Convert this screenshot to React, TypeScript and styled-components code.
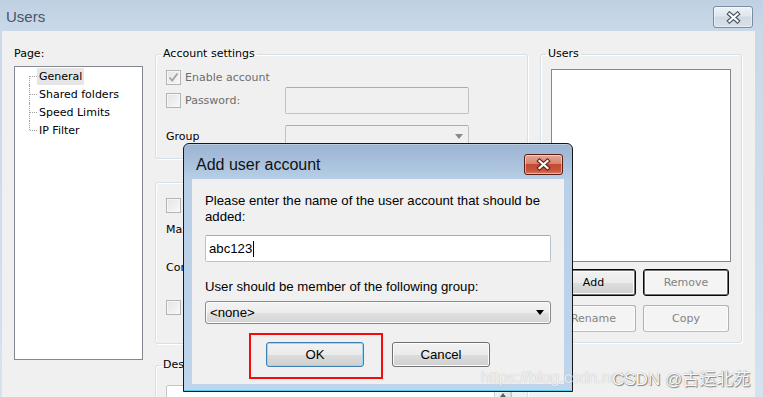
import React from "react";
import styled, { createGlobalStyle } from "styled-components";

const UI = `"DejaVu Sans", Tahoma, sans-serif`;
const SANS = `"Liberation Sans", Arial, sans-serif`;

const GlobalStyle = createGlobalStyle`
  html, body {
    margin: 0;
    padding: 0;
    background: #f0f0f0;
    overflow: hidden;
  }
`;

const Window = styled.div`
  position: relative;
  width: 763px;
  height: 397px;
  overflow: hidden;
  display: flex;
  flex-direction: column;
  background: linear-gradient(#bfd0e3, #cad9e8 31px, #d5e2ef);
  font-family: ${UI};
  font-size: 11px;
  color: #000;
`;

const TitleBar = styled.div`
  height: 31px;
  flex: none;
  display: flex;
  align-items: flex-start;
  justify-content: space-between;
  padding: 0 10px 0 6px;
`;

const WindowTitle = styled.div`
  margin-top: 8px;
  font-family: ${SANS};
  font-size: 15px;
  line-height: 18px;
  color: #46566a;
`;

const CloseButton = styled.div<{ $red?: boolean }>`
  margin-top: ${(p) => (p.$red ? 10 : 6)}px;
  width: ${(p) => (p.$red ? 39 : 40)}px;
  height: ${(p) => (p.$red ? 21 : 22)}px;
  box-sizing: border-box;
  border: 1px solid ${(p) => (p.$red ? "#5a1f14" : "#7d8da1")};
  border-radius: 3px;
  display: flex;
  align-items: center;
  justify-content: center;
  background: ${(p) =>
    p.$red
      ? "linear-gradient(#e6a797 0%, #d88470 45%, #c24a2f 50%, #c5553b 80%, #d67a60 100%)"
      : "linear-gradient(#eef2f7 0%, #dfe6ee 45%, #cfd9e4 50%, #d8e1eb 100%)"};
  box-shadow: inset 0 0 0 1px rgba(255, 255, 255, 0.45);
`;

const CloseGlyph = ({ outline }: { outline: string }) => (
  <svg width="15" height="13" viewBox="0 0 15 13">
    <path d="M3.5 3 L11.5 10 M11.5 3 L3.5 10" stroke={outline} strokeWidth="4.4" strokeLinecap="square" fill="none" />
    <path d="M3.5 3 L11.5 10 M11.5 3 L3.5 10" stroke="#fff" strokeWidth="2.2" strokeLinecap="square" fill="none" />
  </svg>
);

const Client = styled.div`
  flex: 1;
  margin: 0 8px 0 2px;
  background: #f0f0f0;
  display: grid;
  grid-template-columns: 129px 373px 202px;
  column-gap: 12px;
  align-items: start;
  padding: 16px 13px 0 12px;
`;

const Column = styled.div`
  display: flex;
  flex-direction: column;
`;

const PageLabel = styled.div`
  line-height: 14px;
  margin-bottom: 5px;
`;

const TreeBox = styled.div`
  height: 294px;
  box-sizing: border-box;
  border: 1px solid #828790;
  background: #fff;
`;

const TreeItem = styled.div<{ $pos: "first" | "mid" | "last" }>`
  position: relative;
  height: 18px;
  display: flex;
  align-items: center;
  padding-left: 22px;

  &::before {
    content: "";
    position: absolute;
    left: 14px;
    top: ${(p) => (p.$pos === "first" ? "9px" : "0")};
    height: ${(p) => (p.$pos === "mid" ? "18px" : "9px")};
    border-left: 1px dotted #a0a0a0;
  }

  &::after {
    content: "";
    position: absolute;
    left: 15px;
    top: 9px;
    width: 7px;
    border-top: 1px dotted #a0a0a0;
  }
`;

const TreeLabel = styled.span<{ $selected?: boolean }>`
  padding: 0 2px;
  line-height: 17px;
  background: ${(p) => (p.$selected ? "#e6e6e6" : "transparent")};
`;

const Group = styled.fieldset<{ $h: number; $mt?: number }>`
  margin: ${(p) => p.$mt ?? 0}px 0 0;
  padding: 0 10px;
  min-width: 0;
  height: ${(p) => p.$h}px;
  box-sizing: border-box;
  border: 1px solid #d5dfe5;
  border-radius: 3px;
  box-shadow: inset 1px 1px 0 #fff, 1px 1px 0 #fff;
  overflow: hidden;
`;

const Legend = styled.legend`
  padding: 0 2px;
  margin-left: -5px;
  line-height: 14px;
`;

const FormRow = styled.div<{ $mt: number; $h: number }>`
  display: flex;
  align-items: center;
  height: ${(p) => p.$h}px;
  margin-top: ${(p) => p.$mt}px;
`;

const RowLabel = styled.div<{ $w?: number; $muted?: boolean }>`
  display: flex;
  align-items: center;
  gap: 4px;
  width: ${(p) => (p.$w ? `${p.$w}px` : "auto")};
  flex: none;
  color: ${(p) => (p.$muted ? "#6d6d6d" : "#000")};
  white-space: nowrap;
`;

const CheckBox = styled.span`
  width: 15px;
  height: 15px;
  box-sizing: border-box;
  border: 1px solid #b4b4b4;
  background: linear-gradient(135deg, #e4e4e4, #f8f8f8);
  box-shadow: inset 0 0 0 1px #f6f6f6;
  display: inline-flex;
  align-items: center;
  justify-content: center;
  flex: none;
`;

const Check = ({ checked }: { checked?: boolean }) => (
  <CheckBox>
    {checked && (
      <svg width="11" height="11" viewBox="0 0 11 11">
        <path d="M1.5 5.5 L4.2 8.5 L9.5 1.5" stroke="#a3a3a3" strokeWidth="1.8" fill="none" />
      </svg>
    )}
  </CheckBox>
);

const DisabledField = styled.div<{ $h: number }>`
  width: 184px;
  height: ${(p) => p.$h}px;
  box-sizing: border-box;
  border: 1px solid #c2c2c2;
  border-top-color: #acacac;
  border-radius: 2px;
  background: #f0f0f0;
  display: flex;
  align-items: center;
  justify-content: flex-end;
  padding-right: 5px;
`;

const Arrow = styled.span<{ $color: string }>`
  width: 0;
  height: 0;
  border-left: 4px solid transparent;
  border-right: 4px solid transparent;
  border-top: 5px solid ${(p) => p.$color};
`;

const SmallField = styled.div`
  width: 60px;
  height: 20px;
  box-sizing: border-box;
  border: 1px solid #abadb3;
  background: #fff;
  margin-left: 12px;
`;

const MemoBox = styled.div`
  margin-top: 13px;
  width: 346px;
  height: 60px;
  box-sizing: border-box;
  border: 1px solid #c5c5c5;
  border-radius: 2px;
  background: #fff;
  display: flex;
  justify-content: flex-end;
`;

const ScrollUp = styled.div`
  width: 17px;
  height: 17px;
  box-sizing: border-box;
  border: 1px solid #d0d0d0;
  border-radius: 2px;
  background: linear-gradient(90deg, #f2f2f2, #e6e6e6);
  display: flex;
  align-items: center;
  justify-content: center;

  &::after {
    content: "";
    border-left: 3px solid transparent;
    border-right: 3px solid transparent;
    border-bottom: 4px solid #5e5e5e;
  }
`;

const ListBox = styled.div`
  margin-top: 8px;
  height: 193px;
  box-sizing: border-box;
  border: 1px solid #828790;
  background: #fff;
`;

const ButtonGrid = styled.div`
  margin-top: 7px;
  display: grid;
  grid-template-columns: 85px 86px;
  column-gap: 7px;
  row-gap: 9px;
`;

const UserButton = styled.div<{ $variant: "default" | "framed" | "disabled" }>`
  height: 27px;
  box-sizing: border-box;
  display: flex;
  align-items: center;
  justify-content: center;
  border-radius: 3px;
  border: 1px solid ${(p) => (p.$variant === "disabled" ? "#adb2b5" : "#0a0a0a")};
  border-bottom-color: ${(p) => (p.$variant === "disabled" ? "#9fc6e4" : "#0a0a0a")};
  color: ${(p) => (p.$variant === "default" ? "#000" : "#838383")};
  background: ${(p) =>
    p.$variant === "default"
      ? "linear-gradient(#f2f2f2 0%, #ebebeb 50%, #dddddd 51%, #cfcfcf 100%)"
      : "#f4f4f4"};
  box-shadow: ${(p) =>
    p.$variant === "disabled" ? "inset 0 0 0 1px #fbfbfb" : "inset 0 0 0 1px #707070, inset 0 0 0 2px #fcfcfc"};
`;

const Dialog = styled.div`
  position: absolute;
  left: 183px;
  top: 143px;
  width: 390px;
  height: 249px;
  box-sizing: border-box;
  border: 1px solid #161616;
  border-radius: 6px 6px 0 0;
  background: linear-gradient(#9bb4d1 0px, #a8c0dc 18px, #b8cfe7 36px, #bfd5ec 100%);
  box-shadow: inset 0 -1px 0 #52d0f0, inset 0 1px 0 rgba(255, 255, 255, 0.35);
  display: flex;
  flex-direction: column;
  font-family: ${SANS};
  font-size: 13.2px;
`;

const DialogTitleBar = styled.div`
  height: 35px;
  flex: none;
  display: flex;
  align-items: flex-start;
  justify-content: space-between;
  padding: 0 9px 0 12px;
`;

const DialogTitle = styled.div`
  margin-top: 12px;
  font-size: 16px;
  line-height: 18px;
  color: #111;
`;

const DialogBody = styled.div`
  flex: 1;
  margin: 0 8px 7px;
  background: #f0f0f0;
  padding: 0 13px;
  display: flex;
  flex-direction: column;
`;

const Prompt = styled.div<{ $mt: number }>`
  margin-top: ${(p) => p.$mt}px;
  line-height: 16px;
`;

const NameInput = styled.div`
  margin-top: 10px;
  height: 27px;
  box-sizing: border-box;
  border: 1px solid #b9c3d0;
  border-top-color: #a3adba;
  border-radius: 2px;
  background: #fff;
  display: flex;
  align-items: center;
  padding-left: 3px;
`;

const Caret = styled.span`
  width: 1px;
  height: 16px;
  margin-left: 1px;
  background: #000;
`;

const Combo = styled.div`
  margin-top: 6px;
  height: 23px;
  box-sizing: border-box;
  border: 1px solid #8a8a8a;
  border-radius: 3px;
  background: linear-gradient(#f3f3f3 0%, #ececec 50%, #e0e0e0 51%, #d5d5d5 100%);
  box-shadow: inset 0 0 0 1px #fbfbfb;
  display: flex;
  align-items: center;
  justify-content: space-between;
  padding: 0 6px 0 4px;
`;

const ButtonRow = styled.div`
  margin-top: 18px;
  display: flex;
  justify-content: center;
  gap: 28px;
`;

const Marked = styled.div`
  position: relative;
  display: flex;
`;

const RedMark = styled.div`
  position: absolute;
  left: -17px;
  right: -19px;
  top: -9px;
  bottom: -12px;
  border: 2px solid #f20c0c;
`;

const DialogButton = styled.div<{ $focused?: boolean }>`
  width: 98px;
  height: 25px;
  box-sizing: border-box;
  border: 1px solid ${(p) => (p.$focused ? "#3c7fb1" : "#707070")};
  border-radius: 3px;
  background: linear-gradient(#f2f2f2 0%, #ebebeb 50%, #dddddd 51%, #cfcfcf 100%);
  box-shadow: inset 0 0 0 1px ${(p) => (p.$focused ? "#9bd7f7" : "#fcfcfc")};
  display: flex;
  align-items: center;
  justify-content: center;
`;

const WatermarkUrl = styled.div`
  position: absolute;
  left: 481px;
  top: 369px;
  white-space: nowrap;
  font-family: ${SANS};
  font-size: 16px;
  line-height: 18px;
  color: rgba(255, 255, 255, 0.8);
  text-shadow: 0 0 1px rgba(110, 110, 110, 0.5);
`;

const WatermarkTag = styled.div`
  position: absolute;
  left: 612px;
  top: 369px;
  font-family: ${SANS}, "Noto Sans CJK SC", sans-serif;
  font-size: 17px;
  line-height: 22px;
  color: #fafafa;
  text-shadow: 1px 1px 1px rgba(0, 0, 0, 0.45), 0 0 1px rgba(0, 0, 0, 0.4);
`;

const treeItems = ["General", "Shared folders", "Speed Limits", "IP Filter"];

export default function App() {
  return (
    <Window>
      <GlobalStyle />
      <TitleBar>
        <WindowTitle>Users</WindowTitle>
        <CloseButton>
          <CloseGlyph outline="#4a5563" />
        </CloseButton>
      </TitleBar>

      <Client>
        <Column>
          <PageLabel>Page:</PageLabel>
          <TreeBox>
            {treeItems.map((t, i) => (
              <TreeItem key={t} $pos={i === 0 ? "first" : i === treeItems.length - 1 ? "last" : "mid"}>
                <TreeLabel $selected={i === 0}>{t}</TreeLabel>
              </TreeItem>
            ))}
          </TreeBox>
        </Column>

        <Column>
          <Group $h={112}>
            <Legend>Account settings</Legend>
            <FormRow $mt={8} $h={16}>
              <RowLabel $muted>
                <Check checked />
                Enable account
              </RowLabel>
            </FormRow>
            <FormRow $mt={2} $h={27}>
              <RowLabel $w={119} $muted>
                <Check />
                Password:
              </RowLabel>
              <DisabledField $h={27} />
            </FormRow>
            <FormRow $mt={11} $h={22}>
              <RowLabel $w={119}>Group</RowLabel>
              <DisabledField $h={22}>
                <Arrow $color="#8a8a8a" />
              </DisabledField>
            </FormRow>
          </Group>

          <Group $h={162} $mt={23}>
            <FormRow $mt={14} $h={16}>
              <Check />
            </FormRow>
            <FormRow $mt={6} $h={20}>
              <RowLabel>Maximum connection count:</RowLabel>
              <SmallField />
            </FormRow>
            <FormRow $mt={18} $h={20}>
              <RowLabel>Connection limit per IP:</RowLabel>
              <SmallField />
            </FormRow>
            <FormRow $mt={22} $h={16}>
              <Check />
            </FormRow>
          </Group>

          <Group $h={80} $mt={14}>
            <Legend>Description</Legend>
            <MemoBox>
              <ScrollUp />
            </MemoBox>
          </Group>
        </Column>

        <Column>
          <Group $h={296}>
            <Legend>Users</Legend>
            <ListBox />
            <ButtonGrid>
              <UserButton $variant="default">Add</UserButton>
              <UserButton $variant="framed">Remove</UserButton>
              <UserButton $variant="disabled">Rename</UserButton>
              <UserButton $variant="disabled">Copy</UserButton>
            </ButtonGrid>
          </Group>
        </Column>
      </Client>

      <Dialog>
        <DialogTitleBar>
          <DialogTitle>Add user account</DialogTitle>
          <CloseButton $red>
            <CloseGlyph outline="#6b2417" />
          </CloseButton>
        </DialogTitleBar>
        <DialogBody>
          <Prompt $mt={14}>Please enter the name of the user account that should be added:</Prompt>
          <NameInput>
            abc123
            <Caret />
          </NameInput>
          <Prompt $mt={17}>User should be member of the following group:</Prompt>
          <Combo>
            &lt;none&gt;
            <Arrow $color="#000" />
          </Combo>
          <ButtonRow>
            <Marked>
              <DialogButton $focused>OK</DialogButton>
              <RedMark />
            </Marked>
            <DialogButton>Cancel</DialogButton>
          </ButtonRow>
        </DialogBody>
      </Dialog>

      <WatermarkUrl>https://blog.csdn.net/</WatermarkUrl>
      <WatermarkTag>CSDN @古运北苑</WatermarkTag>
    </Window>
  );
}
